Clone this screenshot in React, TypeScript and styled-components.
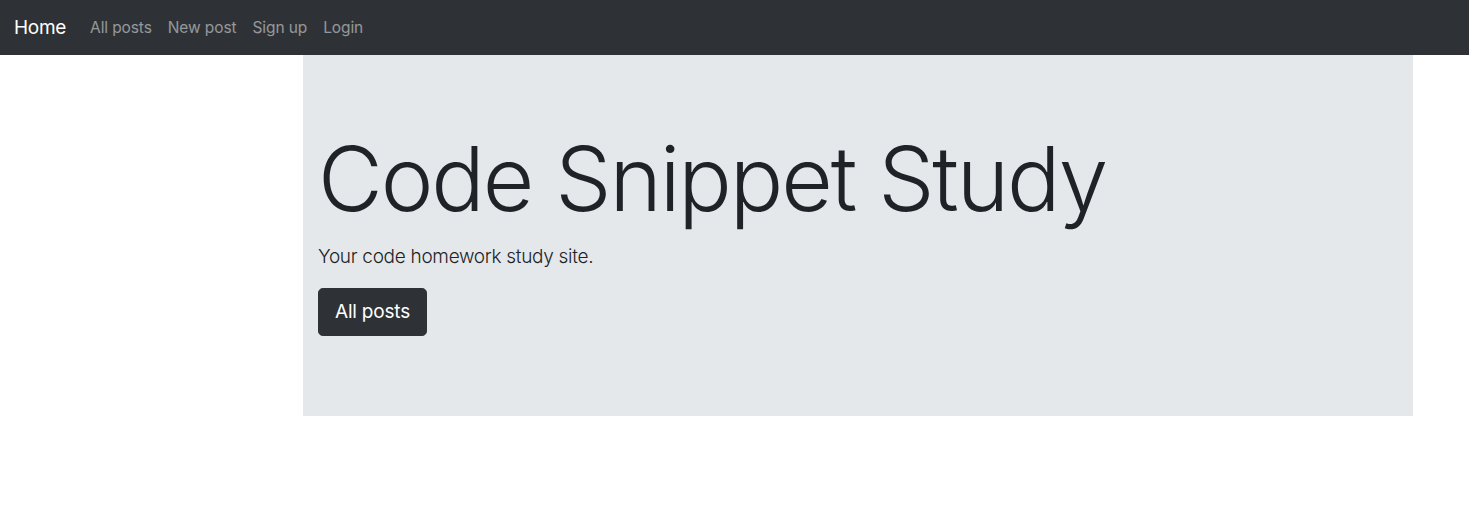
import React from "react";
import styled, { createGlobalStyle } from "styled-components";

const GlobalStyle = createGlobalStyle`
  html, body { margin: 0; padding: 0; background: #ffffff; }
  body {
    font-family: Inter, "Noto Sans", "Liberation Sans", sans-serif;
    color: #1f2327;
    -webkit-font-smoothing: antialiased;
  }
  * { box-sizing: border-box; }
`;

const NavBar = styled.nav`
  display: flex;
  align-items: center;
  height: 55px;
  padding: 0 16px;
  background: #2e3236;
`;

const Brand = styled.a`
  font-size: 19px;
  letter-spacing: -0.3px;
  line-height: 30px;
  color: #ffffff;
  text-decoration: none;
  margin-right: 16px;
  margin-left: -2px;
`;

const NavList = styled.div`
  display: flex;
  align-items: center;
`;

const NavLink = styled.a`
  font-size: 15.5px;
  letter-spacing: -0.1px;
  line-height: 24px;
  padding: 8px;
  color: rgba(255, 255, 255, 0.5);
  text-decoration: none;
`;

const Main = styled.div`
  display: grid;
  grid-template-columns: 303px 1110px;
`;

const Jumbotron = styled.section`
  grid-column: 2;
  background: #e4e8eb;
  padding: 64px 15px;
`;

const Title = styled.h1`
  margin: 0 0 6px;
  padding-top: 2px;
  font-size: 89px;
  font-weight: 300;
  line-height: 115px;
  letter-spacing: -2.1px;
  color: #1f2327;
`;

const Lead = styled.p`
  margin: 0 0 16px;
  font-size: 19px;
  font-weight: 300;
  letter-spacing: -0.3px;
  line-height: 30px;
  color: #1f2327;
`;

const Actions = styled.p`
  margin: 0 0 16px;
`;

const Button = styled.a`
  display: inline-block;
  padding: 8px 16px;
  font-size: 19px;
  letter-spacing: -0.2px;
  line-height: 30px;
  border: 1px solid #2e3236;
  border-radius: 4.8px;
  background: #2e3236;
  color: #ffffff;
  text-decoration: none;
`;

export default function App() {
  return (
    <>
      <GlobalStyle />
      <NavBar>
        <Brand href="#">Home</Brand>
        <NavList>
          <NavLink href="#">All posts</NavLink>
          <NavLink href="#">New post</NavLink>
          <NavLink href="#">Sign up</NavLink>
          <NavLink href="#">Login</NavLink>
        </NavList>
      </NavBar>
      <Main>
        <Jumbotron>
          <Title>Code Snippet Study</Title>
          <Lead>Your code homework study site.</Lead>
          <Actions>
            <Button href="#">All posts</Button>
          </Actions>
        </Jumbotron>
      </Main>
    </>
  );
}
